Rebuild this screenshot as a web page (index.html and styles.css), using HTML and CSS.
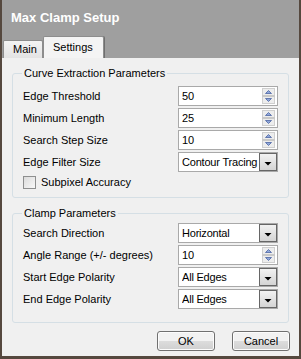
FILE: index.html
```html
<!DOCTYPE html>
<html lang="en">
<head>
    <meta charset="UTF-8">
    <title>Max Clamp Setup</title>
    <link rel="stylesheet" href="styles.css">
</head>
<body>
    <div class="window">
        <div class="titlebar">Max Clamp Setup</div>

        <!-- Tab strip -->
        <div class="tabs">
            <div class="tab">Main</div>
            <div class="tab active">Settings</div>
        </div>

        <div class="panel">
            <fieldset class="group group-curve">
                <legend>Curve Extraction Parameters</legend>
                <div class="row">
                    <label>Edge Threshold</label>
                    <div class="field"><span class="value">50</span>
                        <svg class="spin" width="13" height="16" viewBox="0 0 13 16"><rect x="0.5" y="0.5" width="12" height="15" fill="#ededed" stroke="#cfcfcf"/><rect x="0" y="7" width="13" height="2" fill="#c9c9c9"/><path d="M3.5 5.5 L6.5 2.5 L9.5 5.5 Z" fill="#8ea6d8" stroke="#4b64a4" stroke-width="0.8"/><path d="M3.5 10.5 L6.5 13.5 L9.5 10.5 Z" fill="#8ea6d8" stroke="#4b64a4" stroke-width="0.8"/></svg>
                    </div>
                </div>
                <div class="row">
                    <label>Minimum Length</label>
                    <div class="field"><span class="value">25</span>
                        <svg class="spin" width="13" height="16" viewBox="0 0 13 16"><rect x="0.5" y="0.5" width="12" height="15" fill="#ededed" stroke="#cfcfcf"/><rect x="0" y="7" width="13" height="2" fill="#c9c9c9"/><path d="M3.5 5.5 L6.5 2.5 L9.5 5.5 Z" fill="#8ea6d8" stroke="#4b64a4" stroke-width="0.8"/><path d="M3.5 10.5 L6.5 13.5 L9.5 10.5 Z" fill="#8ea6d8" stroke="#4b64a4" stroke-width="0.8"/></svg>
                    </div>
                </div>
                <div class="row">
                    <label>Search Step Size</label>
                    <div class="field"><span class="value">10</span>
                        <svg class="spin" width="13" height="16" viewBox="0 0 13 16"><rect x="0.5" y="0.5" width="12" height="15" fill="#ededed" stroke="#cfcfcf"/><rect x="0" y="7" width="13" height="2" fill="#c9c9c9"/><path d="M3.5 5.5 L6.5 2.5 L9.5 5.5 Z" fill="#8ea6d8" stroke="#4b64a4" stroke-width="0.8"/><path d="M3.5 10.5 L6.5 13.5 L9.5 10.5 Z" fill="#8ea6d8" stroke="#4b64a4" stroke-width="0.8"/></svg>
                    </div>
                </div>
                <div class="row">
                    <label>Edge Filter Size</label>
                    <div class="field combo"><span class="value">Contour Tracing</span>
                        <span class="drop"><svg width="16" height="16" viewBox="0 0 16 16"><path d="M4.5 8 H11.5 L8 11.5 Z" fill="#000"/></svg></span>
                    </div>
                </div>
                <div class="check-row">
                    <span class="checkbox"></span>
                    <span>Subpixel Accuracy</span>
                </div>
            </fieldset>

            <fieldset class="group group-clamp">
                <legend>Clamp Parameters</legend>
                <div class="row">
                    <label>Search Direction</label>
                    <div class="field combo"><span class="value">Horizontal</span>
                        <span class="drop"><svg width="16" height="16" viewBox="0 0 16 16"><path d="M4.5 8 H11.5 L8 11.5 Z" fill="#000"/></svg></span>
                    </div>
                </div>
                <div class="row">
                    <label>Angle Range (+/- degrees)</label>
                    <div class="field"><span class="value">10</span>
                        <svg class="spin" width="13" height="16" viewBox="0 0 13 16"><rect x="0.5" y="0.5" width="12" height="15" fill="#ededed" stroke="#cfcfcf"/><rect x="0" y="7" width="13" height="2" fill="#c9c9c9"/><path d="M3.5 5.5 L6.5 2.5 L9.5 5.5 Z" fill="#8ea6d8" stroke="#4b64a4" stroke-width="0.8"/><path d="M3.5 10.5 L6.5 13.5 L9.5 10.5 Z" fill="#8ea6d8" stroke="#4b64a4" stroke-width="0.8"/></svg>
                    </div>
                </div>
                <div class="row">
                    <label>Start Edge Polarity</label>
                    <div class="field combo"><span class="value">All Edges</span>
                        <span class="drop"><svg width="16" height="16" viewBox="0 0 16 16"><path d="M4.5 8 H11.5 L8 11.5 Z" fill="#000"/></svg></span>
                    </div>
                </div>
                <div class="row">
                    <label>End Edge Polarity</label>
                    <div class="field combo"><span class="value">All Edges</span>
                        <span class="drop"><svg width="16" height="16" viewBox="0 0 16 16"><path d="M4.5 8 H11.5 L8 11.5 Z" fill="#000"/></svg></span>
                    </div>
                </div>
            </fieldset>

            <div class="buttons">
                <button class="btn">OK</button>
                <button class="btn">Cancel</button>
            </div>
        </div>
    </div>
</body>
</html>
```

FILE: styles.css
```css
/* Reset and base font */
* {
    box-sizing: border-box;
    margin: 0;
    padding: 0;
}
body {
    font-family: "Liberation Sans", Arial, sans-serif;
    font-size: 11px;
    color: #000;
    background: #9f9f9f;
}
/* Dialog frame */
.window {
    width: 301px;
    height: 359px;
    display: flex;
    flex-direction: column;
    background: #9f9f9f;
    border: 2px solid #55483e;
    border-top: 0;
    border-bottom-width: 3px;
}
.titlebar {
    height: 29px;
    padding: 10px 0 0 9px;
    color: #fff;
    font-size: 13px;
    font-weight: bold;
}
/* Tabs */
.tabs {
    height: 29px;
    display: flex;
    align-items: flex-end;
    padding-left: 1px;
}
.tab {
    width: 40px;
    height: 18px;
    padding-left: 9px;
    line-height: 17px;
    border: 1px solid #8d8d8d;
    border-bottom: 0;
    border-radius: 2px 2px 0 0;
    background: linear-gradient(#f3f3f3, #e3e3e3);
}
.tab.active {
    width: 61px;
    height: 22px;
    line-height: 20px;
    background: #f4f4f4;
    box-shadow: 1px 0 0 #6f6f6f;
}
/* Tab page */
.panel {
    flex: 1;
    background: #f0f0f0;
    padding: 9px 10px 0 10px;
}
.group {
    border: 1px solid #d5dfe5;
    border-radius: 3px;
    padding: 6px 10px 8px 10px;
}
.group legend {
    line-height: 13px;
    padding: 0 2px;
    margin-left: -1px;
}
.group-clamp {
    margin-top: 9px;
    padding-top: 3px;
    padding-bottom: 13px;
}
/* Label + control rows */
.row {
    display: flex;
    align-items: center;
    justify-content: space-between;
    height: 20px;
}
.row + .row {
    margin-top: 2px;
}
.field {
    width: 100px;
    height: 20px;
    display: flex;
    align-items: center;
    padding: 0 2px 0 3px;
    border: 1px solid #a9a9a9;
    background: #fff;
}
.value {
    flex: 1;
    min-width: 0;
    white-space: nowrap;
    overflow: hidden;
}
.spin {
    display: block;
    flex-shrink: 0;
}
.combo {
    padding-right: 0;
}
.combo .value {
    letter-spacing: -0.2px;
}
.drop {
    flex-shrink: 0;
    width: 18px;
    height: 18px;
    border: 1px solid #666;
    background: linear-gradient(#f2f2f2, #d4d4d4);
}
.drop svg {
    display: block;
}
/* Checkbox row */
.check-row {
    display: flex;
    align-items: center;
    gap: 5px;
    height: 14px;
    margin-top: 3px;
}
.checkbox {
    width: 13px;
    height: 13px;
    border: 1px solid #8e8f8f;
    background: linear-gradient(135deg, #dcdcdc, #f8f8f8);
}
/* Dialog buttons */
.buttons {
    display: flex;
    justify-content: flex-end;
    gap: 17px;
    margin: 8px -1px 0 0;
}
.btn {
    width: 58px;
    height: 20px;
    font-family: inherit;
    font-size: 11px;
    color: #000;
    border: 1px solid #707070;
    border-radius: 3px;
    background: linear-gradient(#f2f2f2 50%, #dddddd 50%, #cfcfcf);
    box-shadow: inset 0 0 0 1px #fcfcfc;
}
```
